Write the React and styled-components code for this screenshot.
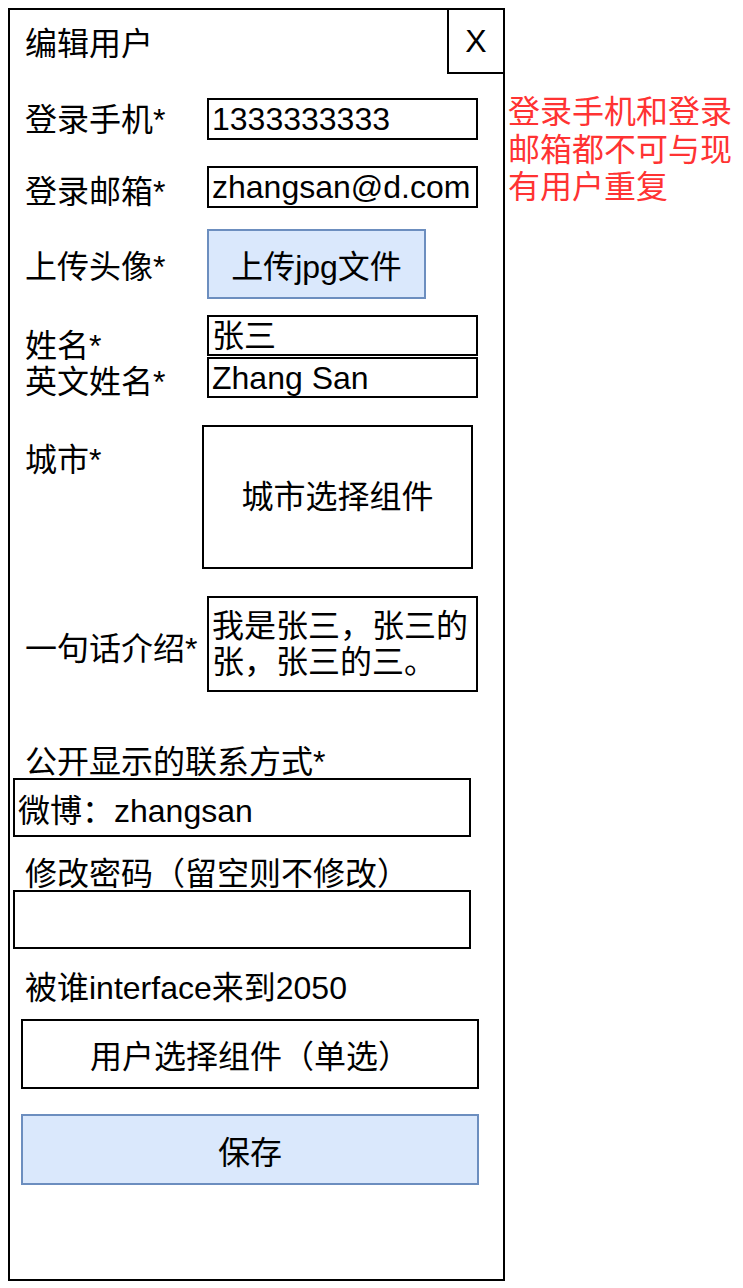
import styled, { createGlobalStyle } from "styled-components";

const GlobalStyle = createGlobalStyle`
  body {
    margin: 8px;
    background: #ffffff;
    color: #000000;
    font-family: "Liberation Sans", "Noto Sans CJK SC", sans-serif;
  }

  * {
    box-sizing: border-box;
  }
`;

const Page = styled.div`
  display: flex;
  align-items: flex-start;
  font-size: 32px;
`;

const Frame = styled.div`
  width: 497px;
  height: 1273px;
  border: 2px solid #000;
  display: flex;
  flex-direction: column;
  flex-shrink: 0;
`;

const Header = styled.div`
  display: flex;
  justify-content: space-between;
  align-items: flex-start;
  height: 64px;
`;

const Title = styled.h1`
  margin: 0;
  padding: 16px 0 0 15px;
  font-size: 32px;
  font-weight: normal;
  line-height: 37px;
`;

const CloseButton = styled.button`
  width: 58px;
  height: 66px;
  margin: -2px -2px 0 0;
  padding: 0;
  border: 2px solid #000;
  background: #fff;
  font-family: inherit;
  font-size: 32px;
  color: #000;
  display: flex;
  align-items: center;
  justify-content: center;
`;

const Row = styled.div`
  display: flex;
  align-items: flex-start;
  margin-top: ${(p) => p.$gap}px;
  padding-left: 15px;
`;

const Label = styled.div`
  width: 182px;
  flex-shrink: 0;
  margin-top: ${(p) => p.$offset}px;
  line-height: ${(p) => p.$lh || 37}px;
`;

const TextBox = styled.div`
  width: 271px;
  height: ${(p) => p.$h}px;
  margin-left: ${(p) => p.$shift || 0}px;
  border: 2px solid #000;
  padding: 0 3px;
  display: flex;
  align-items: center;
  justify-content: ${(p) => (p.$center ? "center" : "flex-start")};
  line-height: 36px;
  white-space: pre-wrap;
`;

const Stack = styled.div`
  display: flex;
  flex-direction: column;
  gap: 1px;
`;

const UploadButton = styled.button`
  width: 219px;
  height: 70px;
  padding: 0;
  border: 2px solid #6c8ebf;
  background: #dae8fc;
  font-family: inherit;
  font-size: 32px;
  color: #000;
`;

const SectionLabel = styled.div`
  margin-top: ${(p) => p.$gap}px;
  padding-left: 15px;
  line-height: 32px;
`;

const WideBox = styled.div`
  width: 458px;
  height: ${(p) => p.$h}px;
  margin-top: ${(p) => p.$gap || 0}px;
  margin-left: ${(p) => p.$inset}px;
  border: 2px solid #000;
  padding: 0 3px;
  display: flex;
  align-items: center;
  justify-content: ${(p) => (p.$center ? "center" : "flex-start")};
`;

const SaveButton = styled.button`
  width: 458px;
  height: 71px;
  margin: 25px 0 0 11px;
  padding: 0;
  border: 2px solid #6c8ebf;
  background: #dae8fc;
  font-family: inherit;
  font-size: 32px;
  color: #000;
`;

const Note = styled.p`
  width: 228px;
  margin: 86px 0 0 3px;
  color: #ff3333;
  line-height: 37.5px;
`;

export default function App() {
  return (
    <>
      <GlobalStyle />
      <Page>
        <Frame>
          <Header>
            <Title>编辑用户</Title>
            <CloseButton>X</CloseButton>
          </Header>

          <Row $gap={24}>
            <Label $offset={4}>登录手机*</Label>
            <TextBox $h={42}>1333333333</TextBox>
          </Row>

          <Row $gap={26}>
            <Label $offset={8}>登录邮箱*</Label>
            <TextBox $h={42}>zhangsan@d.com</TextBox>
          </Row>

          <Row $gap={18}>
            <Label $offset={20}>上传头像*</Label>
            <UploadButton>上传jpg文件</UploadButton>
          </Row>

          <Row $gap={16}>
            <Label $offset={13} $lh={36}>
              姓名*
              <br />
              英文姓名*
            </Label>
            <Stack>
              <TextBox $h={41}>张三</TextBox>
              <TextBox $h={41}>Zhang San</TextBox>
            </Stack>
          </Row>

          <Row $gap={25}>
            <Label $offset={17}>城市*</Label>
            <TextBox $h={144} $shift={-5} $center>
              城市选择组件
            </TextBox>
          </Row>

          <Row $gap={27}>
            <Label $offset={35}>一句话介绍*</Label>
            <TextBox $h={96}>我是张三，张三的张，张三的三。</TextBox>
          </Row>

          <SectionLabel $gap={54}>公开显示的联系方式*</SectionLabel>
          <WideBox $h={59} $inset={3}>
            微博：zhangsan
          </WideBox>

          <SectionLabel $gap={21}>修改密码（留空则不修改）</SectionLabel>
          <WideBox $h={59} $inset={3} />

          <SectionLabel $gap={23}>被谁interface来到2050</SectionLabel>
          <WideBox $h={70} $inset={11} $gap={15} $center>
            用户选择组件（单选）
          </WideBox>

          <SaveButton>保存</SaveButton>
        </Frame>

        <Note>登录手机和登录邮箱都不可与现有用户重复</Note>
      </Page>
    </>
  );
}
